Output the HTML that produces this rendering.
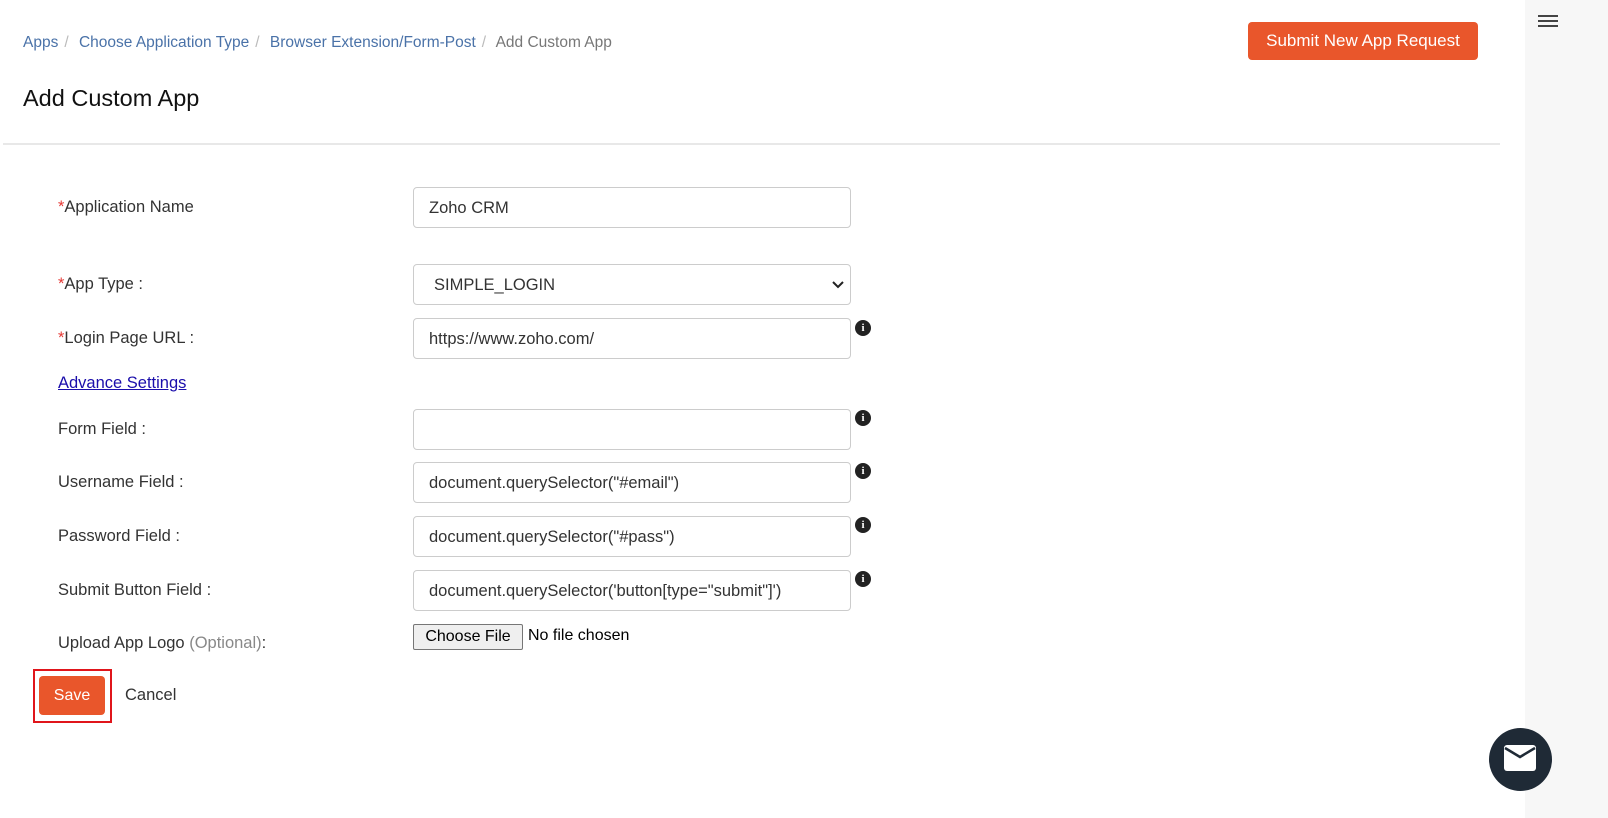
<!DOCTYPE html>
<html><head><meta charset="utf-8"><style>
*{box-sizing:border-box;margin:0;padding:0}
body{width:1608px;height:818px;background:#fff;font-family:"Liberation Sans",sans-serif;position:relative;overflow:hidden;color:#333}
.a{position:absolute;white-space:nowrap}
.side{position:absolute;left:1525px;top:0;width:83px;height:818px;background:#f7f7f7}
.bc{top:34px;font-size:15.5px;color:#4a72a8}
.bc .s{color:#bbb;margin:0 6px}
.lbl{left:58px;font-size:16.5px;color:#333}
.req{color:#e53935}
.inp{left:413px;width:438px;height:41px;border:1px solid #ccc;border-radius:4px;font-size:16.5px;color:#333;padding:11px 15px;line-height:18px}
.info{width:16px;height:16px;border-radius:50%;background:#222;color:#fff;font-size:11px;font-weight:bold;text-align:center;line-height:16px;font-family:"Liberation Serif",serif}
</style></head><body>
<div class="side"></div>
<div class="a bc" style="left:23px">Apps<span class="s">/</span> Choose Application Type<span class="s">/</span> Browser Extension/Form-Post<span class="s">/</span> <span style="color:#777">Add Custom App</span></div>
<div class="a" style="left:1248px;top:22px;width:230px;height:38px;background:#e9562b;border-radius:4px;color:#fff;font-size:17px;text-align:center;line-height:37px">Submit New App Request</div>
<div class="a" style="left:1538px;top:15px;width:20px;height:2px;background:#444;box-shadow:0 5px 0 #444,0 10px 0 #444"></div>
<div class="a" style="left:23px;top:85px;font-size:23.5px;color:#111">Add Custom App</div>
<div class="a" style="left:3px;top:143px;width:1497px;height:2px;background:#e8e8e8"></div>

<div class="a lbl" style="top:198px"><span class="req">*</span>Application Name</div>
<div class="a inp" style="top:187px">Zoho CRM</div>
<div class="a lbl" style="top:275px"><span class="req">*</span>App Type :</div>
<div class="a inp" style="top:264px;padding-left:20px">SIMPLE_LOGIN<svg style="position:absolute;right:6px;top:16px" width="12" height="8" viewBox="0 0 12 8"><path d="M1 1l5 5 5-5" fill="none" stroke="#222" stroke-width="2"/></svg></div>
<div class="a lbl" style="top:329px"><span class="req">*</span>Login Page URL :</div>
<div class="a inp" style="top:318px">https://www.zoho.com/</div>
<div class="a info" style="left:855px;top:320px">i</div>
<div class="a" style="left:58px;top:374px;font-size:16.5px;color:#1a0dab;text-decoration:underline">Advance Settings</div>
<div class="a lbl" style="top:420px">Form Field :</div>
<div class="a inp" style="top:409px"></div>
<div class="a info" style="left:855px;top:410px">i</div>
<div class="a lbl" style="top:473px">Username Field :</div>
<div class="a inp" style="top:462px">document.querySelector("#email")</div>
<div class="a info" style="left:855px;top:463px">i</div>
<div class="a lbl" style="top:527px">Password Field :</div>
<div class="a inp" style="top:516px">document.querySelector("#pass")</div>
<div class="a info" style="left:855px;top:517px">i</div>
<div class="a lbl" style="top:581px">Submit Button Field :</div>
<div class="a inp" style="top:570px">document.querySelector('button[type="submit"]')</div>
<div class="a info" style="left:855px;top:571px">i</div>
<div class="a lbl" style="top:634px">Upload App Logo <span style="color:#888">(Optional)</span>:</div>
<div class="a" style="left:413px;top:624px;width:110px;height:26px;border:1px solid #767676;border-radius:2px;background:#efefef;font-size:16px;color:#000;text-align:center;line-height:23px">Choose File</div>
<div class="a" style="left:528px;top:627px;font-size:16px;color:#000">No file chosen</div>
<div class="a" style="left:33px;top:669px;width:79px;height:54px;border:2px solid #e0151b"></div>
<div class="a" style="left:39px;top:676px;width:66px;height:39px;background:#e9562b;border-radius:4px;color:#fff;font-size:16px;text-align:center;line-height:39px">Save</div>
<div class="a" style="left:125px;top:686px;font-size:16.5px;color:#333">Cancel</div>
<div class="a" style="left:1489px;top:728px;width:63px;height:63px;border-radius:50%;background:#1f2a36"></div>
<svg class="a" style="left:1503px;top:744px" width="34" height="28" viewBox="0 0 34 28"><rect x="1" y="1" width="32" height="26" rx="3" fill="#fff"/><path d="M2 4l15 9 15-9" fill="none" stroke="#1f2a36" stroke-width="2.5"/></svg>
</body></html>
